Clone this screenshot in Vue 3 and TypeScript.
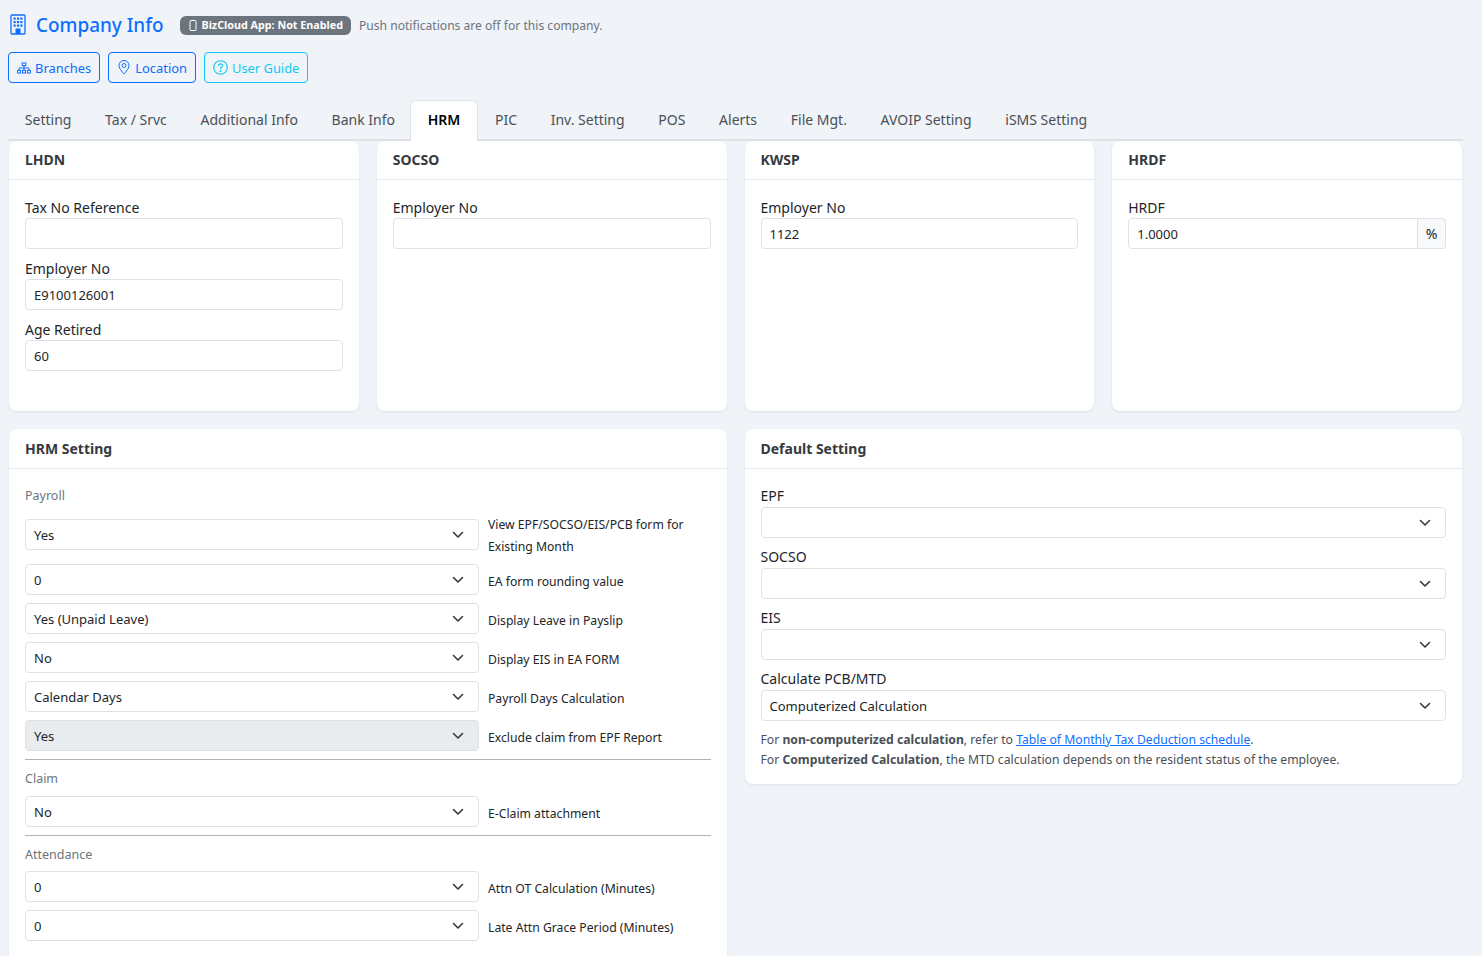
<script setup lang="ts">
const tabs: string[] = ['Setting', 'Tax / Srvc', 'Additional Info', 'Bank Info', 'HRM', 'PIC', 'Inv. Setting', 'POS', 'Alerts', 'File Mgt.', 'AVOIP Setting', 'iSMS Setting']
const payroll = [
  { v: 'Yes', l: 'View EPF/SOCSO/EIS/PCB form for Existing Month', tall: true },
  { v: '0', l: 'EA form rounding value' },
  { v: 'Yes (Unpaid Leave)', l: 'Display Leave in Payslip' },
  { v: 'No', l: 'Display EIS in EA FORM' },
  { v: 'Calendar Days', l: 'Payroll Days Calculation' },
  { v: 'Yes', l: 'Exclude claim from EPF Report', off: true },
]
const attendance = [
  { v: '0', l: 'Attn OT Calculation (Minutes)' },
  { v: '0', l: 'Late Attn Grace Period (Minutes)' },
]
const defaults = [
  { l: 'EPF', v: '' },
  { l: 'SOCSO', v: '' },
  { l: 'EIS', v: '' },
  { l: 'Calculate PCB/MTD', v: 'Computerized Calculation' },
]
</script>

<template>
  <div class="page">
    <div class="head">
      <svg class="bld" width="16" height="21" viewBox="0 0 16 21" fill="none" stroke="#0d6efd">
        <rect x="1" y="1" width="14" height="19" rx="1" stroke-width="1.3" />
        <g fill="#0d6efd" stroke="none">
          <rect x="3.5" y="3.5" width="2.2" height="2.2" /><rect x="6.9" y="3.5" width="2.2" height="2.2" /><rect x="10.3" y="3.5" width="2.2" height="2.2" />
          <rect x="3.5" y="7" width="2.2" height="2.2" /><rect x="6.9" y="7" width="2.2" height="2.2" /><rect x="10.3" y="7" width="2.2" height="2.2" />
          <rect x="3.5" y="10.5" width="2.2" height="2.2" /><rect x="6.9" y="10.5" width="2.2" height="2.2" /><rect x="10.3" y="10.5" width="2.2" height="2.2" />
          <rect x="5.5" y="14.5" width="5" height="5.5" />
        </g>
      </svg>
      <h1>Company Info</h1>
      <span class="badge">
        <svg width="8" height="11" viewBox="0 0 8 11" fill="none" stroke="#fff" stroke-width="1"><rect x="1" y="0.5" width="6" height="10" rx="1" /></svg>
        BizCloud App: Not Enabled
      </span>
      <span class="push">Push notifications are off for this company.</span>
    </div>

    <div class="btns">
      <a class="btn">
        <svg width="14" height="12" viewBox="0 0 14 12" fill="none" stroke="currentColor" stroke-width="1">
          <rect x="5.2" y="1" width="3.6" height="2.6" /><rect x="0.6" y="8.4" width="3" height="2.6" /><rect x="5.5" y="8.4" width="3" height="2.6" /><rect x="10.4" y="8.4" width="3" height="2.6" />
          <path d="M7 3.6V8.4M2.1 8.4V6H11.9V8.4" />
        </svg>
        Branches
      </a>
      <a class="btn loc">
        <svg width="12" height="15" viewBox="0 0 12 15" fill="none" stroke="currentColor" stroke-width="1">
          <path d="M6 14C6 14 1 8.8 1 5.5a5 5 0 0 1 10 0C11 8.8 6 14 6 14Z" /><circle cx="6" cy="5.5" r="2" />
        </svg>
        Location
      </a>
      <a class="btn info">
        <svg width="15" height="15" viewBox="0 0 14 14" fill="none" stroke="currentColor" stroke-width="1">
          <circle cx="7" cy="7" r="6.3" /><path d="M5.2 5.5C5.2 3 8.9 3 8.9 5.4C8.9 6.8 7 6.8 7 8.4" /><circle cx="7" cy="10.3" r="0.4" />
        </svg>
        User Guide
      </a>
    </div>

    <div class="tabs">
      <span v-for="t in tabs" :key="t" class="tab" :class="{ active: t === 'HRM' }">{{ t }}</span>
    </div>

    <div class="row4">
      <section class="card">
        <header>LHDN</header>
        <div class="body short">
          <label>Tax No Reference</label>
          <div class="ctl"></div>
          <label>Employer No</label>
          <div class="ctl">E9100126001</div>
          <label>Age Retired</label>
          <div class="ctl">60</div>
        </div>
      </section>
      <section class="card">
        <header>SOCSO</header>
        <div class="body short">
          <label>Employer No</label>
          <div class="ctl"></div>
        </div>
      </section>
      <section class="card">
        <header>KWSP</header>
        <div class="body short">
          <label>Employer No</label>
          <div class="ctl">1122</div>
        </div>
      </section>
      <section class="card">
        <header>HRDF</header>
        <div class="body short">
          <label>HRDF</label>
          <div class="group">
            <div class="ctl grow">1.0000</div>
            <span class="addon">%</span>
          </div>
        </div>
      </section>
    </div>

    <div class="row2">
      <section class="card">
        <header>HRM Setting</header>
        <div class="body hrm">
          <div class="sub">Payroll</div>
          <div v-for="r in payroll" :key="r.l" class="srow" :class="{ tall: r.tall }">
            <div class="ctl sel" :class="{ off: r.off }">
              <span>{{ r.v }}</span>
              <svg class="chev" width="12" height="8" viewBox="0 0 12 8" fill="none" stroke="#343a40" stroke-width="1.6" stroke-linecap="round" stroke-linejoin="round"><path d="M1.5 1.5 6 6l4.5-4.5" /></svg>
            </div>
            <span class="slabel">{{ r.l }}</span>
          </div>
          <hr />
          <div class="sub">Claim</div>
          <div class="srow">
            <div class="ctl sel">
              <span>No</span>
              <svg class="chev" width="12" height="8" viewBox="0 0 12 8" fill="none" stroke="#343a40" stroke-width="1.6" stroke-linecap="round" stroke-linejoin="round"><path d="M1.5 1.5 6 6l4.5-4.5" /></svg>
            </div>
            <span class="slabel">E-Claim attachment</span>
          </div>
          <hr />
          <div class="sub att">Attendance</div>
          <div v-for="r in attendance" :key="r.l" class="srow">
            <div class="ctl sel">
              <span>{{ r.v }}</span>
              <svg class="chev" width="12" height="8" viewBox="0 0 12 8" fill="none" stroke="#343a40" stroke-width="1.6" stroke-linecap="round" stroke-linejoin="round"><path d="M1.5 1.5 6 6l4.5-4.5" /></svg>
            </div>
            <span class="slabel">{{ r.l }}</span>
          </div>
        </div>
      </section>

      <section class="card right">
        <header>Default Setting</header>
        <div class="body tail">
          <template v-for="d in defaults" :key="d.l">
            <label>{{ d.l }}</label>
            <div class="ctl sel">
              <span>{{ d.v }}</span>
              <svg class="chev" width="12" height="8" viewBox="0 0 12 8" fill="none" stroke="#343a40" stroke-width="1.6" stroke-linecap="round" stroke-linejoin="round"><path d="M1.5 1.5 6 6l4.5-4.5" /></svg>
            </div>
          </template>
          <p class="note">For <b>non-computerized calculation</b>, refer to <a>Table of Monthly Tax Deduction schedule</a>.<br />For <b>Computerized Calculation</b>, the MTD calculation depends on the resident status of the employee.</p>
        </div>
      </section>
    </div>
  </div>
</template>

<style>
html, body { margin: 0; background: #f0f3f8; overflow: hidden; }
</style>

<style scoped>
.page {
  box-sizing: border-box;
  width: 1482px;
  height: 956px;
  overflow: hidden;
  padding: 0 19px 0 8px;
  background: #f0f3f8;
  font-family: "Noto Sans", "Open Sans", sans-serif;
  font-size: 14px;
  color: #212529;
}
.head { display: flex; align-items: center; height: 50px; }
.bld { margin: -2px 10px 0 2px; }
h1 { margin: 0 16px 0 0; font-size: 18.9px; font-weight: 500; color: #0d6efd; line-height: 24px; }
.badge {
  display: inline-flex; align-items: center; gap: 5px;
  height: 19px; padding: 0 8px 0 9px; border-radius: 6px;
  background: #6c757d; color: #fff; font-size: 10.75px; font-weight: 700;
}
.push { margin-left: 8px; font-size: 12.1px; color: #6c757d; }
.btns { display: flex; gap: 8px; margin-top: 2px; }
.btn {
  display: inline-flex; align-items: center; gap: 4px; box-sizing: border-box;
  height: 31px; padding: 0 8px; border: 1px solid #0d6efd; border-radius: 4px;
  color: #0d6efd; font-size: 12.9px;
}
.btn.loc { gap: 5px; padding: 0 8px 0 9px; }
.btn.info { border-color: #0dcaf0; color: #0dcaf0; }
.tabs { display: flex; margin-top: 17px; height: 41px; box-sizing: border-box; border-bottom: 2px solid #dee2e6; }
.tab { box-sizing: border-box; height: 41px; padding: 0 16.85px; line-height: 39px; color: #495057; }
.tab.active {
  margin-left: -2px;
  background: #fff; border: 1px solid #dee2e6; border-bottom: 0; border-radius: 6px 6px 0 0;
  color: #000; font-weight: 600; line-height: 38px;
}
.row4 { display: grid; grid-template-columns: repeat(4, 1fr); column-gap: 18px; margin: 0 1px; }
.row2 { display: grid; grid-template-columns: 1fr 1fr; column-gap: 18px; margin: 18px 1px 0; align-items: start; }
.card { background: #fff; border-radius: 8px; box-shadow: 0 1px 3px rgba(30, 50, 90, .08); overflow: hidden; }
.card header {
  box-sizing: border-box; height: 39px; padding: 0 16px; border-bottom: 1px solid #e3e7ee;
  font-weight: 700; line-height: 38px; color: #343a40;
}
.row2 .card header { height: 40px; line-height: 39px; }
.body { padding: 16px 16px 17px; }
.body.short { height: 231px; box-sizing: border-box; }
.body.tail { padding-bottom: 14px; }
label { display: block; height: 22px; line-height: 24px; margin-top: 0; }
.tail label { line-height: 22px; }
.ctl {
  box-sizing: border-box; height: 31px; border: 1px solid #dee2e6; border-radius: 4px;
  background: #fff; padding: 1px 8px 0; line-height: 29px; font-size: 13px; color: #212529;
  margin-bottom: 8px;
}
.group { display: flex; }
.group .ctl { margin: 0; }
.grow { flex: 1; border-radius: 4px 0 0 4px; }
.addon {
  box-sizing: border-box; width: 28px; height: 31px; line-height: 29px; text-align: center;
  border: 1px solid #dee2e6; border-left: 0; border-radius: 0 4px 4px 0; background: #f8f9fa; font-size: 14px;
}
.sel { display: flex; align-items: center; justify-content: space-between; padding-right: 14px; }
.chev { flex: none; margin-top: -1px; }
.off { background: #e9ecef; }
.hrm { padding-bottom: 30px; }
.sub { font-size: 12.5px; color: #6c757d; line-height: 20px; margin: 1px 0 7px; }
.srow { display: grid; grid-template-columns: 454px 1fr; column-gap: 9px; align-items: center; height: 31px; margin-bottom: 8px; }
.srow .ctl { margin: 0; }
.srow.tall { height: 45px; margin-bottom: 6px; grid-template-rows: 45px; }
.srow.tall .ctl { align-self: start; margin-top: 6px; }
.srow.tall .slabel { padding-top: 1px; }
.slabel { font-size: 12.2px; line-height: 22px; color: #212529; padding-top: 5px; }
hr { border: 0; border-top: 1px solid #adb5bd; margin: 0 0 9px; }
.sub.att { margin-bottom: 6px; }
.note { margin: 9px 0 0; font-size: 12.2px; line-height: 20px; color: #495057; }
.note a { color: #0d6efd; text-decoration: underline; }
</style>
